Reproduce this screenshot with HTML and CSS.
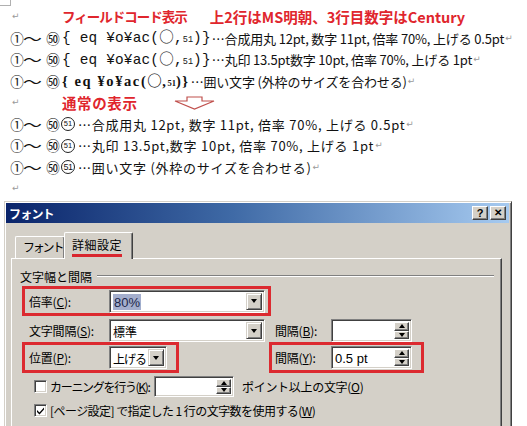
FILE: index.html
```html
<!DOCTYPE html>
<html lang="ja">
<head>
<meta charset="utf-8">
<title>フォント</title>
<link rel="stylesheet" href="styles.css">
</head>
<body>
<div class="corner"></div>
<div class="doc">
  <div class="line"><span class="ret lead">↵</span><span class="red r1 k">フィールドコード表示</span><span class="red r2">上2行はMS明朝、3行目数字はCentury</span></div>
  <div class="line"><span class="cn">①</span><span class="tl"><span class="tlg">～</span></span><span class="cn c50">㊿</span><span class="fc">{ eq ¥o¥ac(<span class="ring">○</span>,<span class="sm">51</span>)}</span><span class="tx"> …合成用丸 12pt, 数字 11pt, 倍率 70%, 上げる 0.5pt</span><span class="ret">↵</span></div>
  <div class="line"><span class="cn">①</span><span class="tl"><span class="tlg">～</span></span><span class="cn c50">㊿</span><span class="fc">{ eq ¥o¥ac(<span class="ring">○</span>,<span class="sm">51</span>)}</span><span class="tx"> …丸印 13.5pt数字 10pt, 倍率 70%, 上げる 1pt</span><span class="ret">↵</span></div>
  <div class="line"><span class="cn">①</span><span class="tl"><span class="tlg">～</span></span><span class="cn c50">㊿</span><span class="fc fc3">{ eq ¥o¥ac(<span class="ring">○</span>,<span class="sm">51</span>)}</span><span class="tx"> …囲い文字 (外枠のサイズを合わせる)</span><span class="ret">↵</span></div>
  <div class="line"><span class="ret lead">↵</span><span class="red r1 n">通常の表示</span><svg class="arrow" width="42" height="14" viewBox="0 0 42 14"><polygon points="13,1 28,1 28,5 40,5 20.5,13 1,5 13,5" fill="#fff" stroke="#c0504d" stroke-width="1.2"/></svg></div>
  <div class="line"><span class="cn">①</span><span class="tl"><span class="tlg">～</span></span><span class="cn c50">㊿</span><span class="c51">51</span><span class="tx t2"> …合成用丸 12pt, 数字 11pt, 倍率 70%, 上げる 0.5pt</span><span class="ret">↵</span></div>
  <div class="line"><span class="cn">①</span><span class="tl"><span class="tlg">～</span></span><span class="cn c50">㊿</span><span class="c51">51</span><span class="tx t2"> …丸印 13.5pt,数字 10pt, 倍率 70%, 上げる 1pt</span><span class="ret">↵</span></div>
  <div class="line"><span class="cn">①</span><span class="tl"><span class="tlg">～</span></span><span class="cn c50">㊿</span><span class="c51 big">51</span><span class="tx t2"> …囲い文字 (外枠のサイズを合わせる)</span><span class="ret">↵</span></div>
  <div class="line"><span class="ret lead">↵</span></div>
</div>

<div class="dialog">
  <div class="titlebar">
    <span class="ttl">フォント</span>
    <span class="tbtn">?</span><span class="tbtn x">✕</span>
  </div>
  <div class="tabs">
    <div class="tab kt">フォント</div>
    <div class="tab sel"><span class="selul">詳細設定</span></div>
  </div>
  <div class="panel">
    <div class="grp"><span>文字幅と間隔</span><span class="ln"></span></div>

    <div class="rbox row1">
      <span class="lbl">倍率(<u>C</u>):</span>
      <div class="combo w156"><span class="val"><span class="hl">80%</span></span><span class="dd"><span class="tri"></span></span></div>
    </div>

    <div class="row row2">
      <span class="lbl">文字間隔(<u>S</u>):</span>
      <div class="combo w156"><span class="val cjk">標準</span><span class="dd"><span class="tri"></span></span></div>
      <span class="lbl lbl2 ml10">間隔(<u>B</u>):</span>
      <div class="spin"><span class="val"></span><span class="sb"><span class="up"><span class="tu"></span></span><span class="dn"><span class="tri"></span></span></span></div>
    </div>

    <div class="row row3">
      <div class="rbox b3l">
        <span class="lbl">位置(<u>P</u>):</span>
        <div class="combo w58"><span class="val cjk tight">上げる</span><span class="dd"><span class="tri"></span></span></div>
      </div>
      <div class="rbox b3r">
        <span class="lbl lbl2">間隔(<u>Y</u>):</span>
        <div class="spin"><span class="val">0.5 pt</span><span class="sb"><span class="up"><span class="tu"></span></span><span class="dn"><span class="tri"></span></span></span></div>
      </div>
    </div>

    <div class="row row4">
      <span class="chk"></span>
      <span class="ctext w107 kk">カーニングを行う(<u>K</u>):</span>
      <div class="spin sp80"><span class="val"></span><span class="sb"><span class="up"><span class="tu"></span></span><span class="dn"><span class="tri"></span></span></span></div>
      <span class="ctext ml8 kp">ポイント以上の文字(<u>O</u>)</span>
    </div>

    <div class="row row5">
      <span class="chk on"><svg width="9" height="9" viewBox="0 0 9 9"><path d="M1 4 L3.5 6.5 L8 1.5 L8 3.5 L3.5 8.5 L1 6 Z" fill="#000"/></svg></span>
      <span class="ctext kw">[ページ設定] で指定した 1 行の文字数を使用する(<u>W</u>)</span>
    </div>
  </div>
</div>
</body>
</html>
```

FILE: styles.css
```css
html, body {
  margin: 0;
  padding: 0;
  background: #fff;
  overflow: hidden;
}
body {
  width: 527px;
  height: 426px;
  position: relative;
  font-family: "Noto Sans CJK JP", "Noto Sans", sans-serif;
  color: #111;
}
.corner {
  position: absolute;
  left: 0;
  top: 0;
  width: 10px;
  height: 5px;
  border-right: 1px solid #b0b0b0;
  border-bottom: 1px solid #b0b0b0;
}
.doc {
  padding: 6px 0 0 10px;
  height: 201px;
  box-sizing: border-box;
}
.line {
  height: 21.5px;
  line-height: 21.5px;
  font-size: 13px;
  white-space: nowrap;
  display: flex;
  align-items: center;
}
.ret {
  color: #9a9a9a;
  font-family: "DejaVu Sans", sans-serif;
  font-size: 9px;
  margin-left: 1px;
}
.ret.lead {
  margin-left: 2px;
  width: 7px;
}
.red {
  color: #e0262d;
  font-weight: bold;
  font-size: 14.5px;
}
.r1 { margin-left: 43px; }
.r1.k { font-size: 13.5px; letter-spacing: -1px; }
.r1.n { font-size: 14.5px; letter-spacing: 0.6px; }
.r2 { margin-left: 23px; letter-spacing: 0; }
.arrow { margin-left: 36px; margin-top: 1px; }
.cn {
  font-size: 13.5px;
  width: 14px;
  display: inline-block;
  text-align: center;
}
.tl {
  display: inline-block;
  width: 22px;
  height: 21px;
  line-height: 21px;
  text-align: left;
}
.tlg {
  display: inline-block;
  font-size: 14px;
  transform: scaleX(1.35);
  transform-origin: left center;
  margin-left: -1px;
}
.c50 {
  width: 14px;
  font-size: 13.5px;
}
.fc {
  font-family: "Liberation Mono", monospace;
  font-size: 14.4px;
  margin-left: 2px;
  letter-spacing: 0.2px;
}
.ring {
  font-family: "Noto Sans CJK JP", sans-serif;
  font-size: 14.5px;
  letter-spacing: 0.3px;
}
.fc3 {
  font-family: "Liberation Serif", serif;
  font-weight: bold;
  font-size: 14.5px;
  letter-spacing: 1.6px;
}
.sm { font-size: 8.5px; letter-spacing: 0; }
.tx { letter-spacing: -0.17px; margin-left: 1px; }
.tx.t2 { letter-spacing: 0.75px; }
.c51 {
  display: inline-block;
  width: 12px;
  height: 12px;
  border: 1px solid #222;
  border-radius: 50%;
  font-family: "Liberation Sans", sans-serif;
  font-size: 7.5px;
  line-height: 12px;
  text-align: center;
  margin-left: 1px;
  margin-right: 2px;
}
.c51.big { font-size: 9px; letter-spacing: -0.6px; }

/* dialog */
.dialog {
  margin: 0 0 0 4px;
  width: 508px;
  height: 240px;
  box-sizing: border-box;
  background: #d4d0c8;
  border-top: 1px solid #d4d0c8;
  border-left: 1px solid #d4d0c8;
  border-right: 1px solid #404040;
  box-shadow: inset 1px 1px #fff, inset -1px 0 #808080;
  padding: 1px 2px 0 1px;
  font-family: "Noto Sans CJK JP", sans-serif;
  font-size: 12px;
  color: #000;
}
.titlebar {
  height: 20px;
  background: linear-gradient(to right, #0a246a 0%, #3f6aa6 45%, #a6caf0 100%);
  display: flex;
  align-items: center;
  padding: 0 3px 0 3px;
}
.ttl {
  color: #fff;
  font-weight: bold;
  font-size: 12px;
  flex: 1;
  letter-spacing: -0.8px;
}
.tbtn {
  width: 16px;
  height: 14px;
  box-sizing: border-box;
  background: #d4d0c8;
  border-top: 1px solid #fff;
  border-left: 1px solid #fff;
  border-right: 1px solid #404040;
  border-bottom: 1px solid #404040;
  box-shadow: inset -1px -1px #808080;
  font-family: "Liberation Sans", sans-serif;
  font-weight: bold;
  font-size: 11px;
  line-height: 12px;
  text-align: center;
  color: #000;
}
.tbtn.x { margin-left: 2px; font-size: 10px; }
.tabs {
  display: flex;
  align-items: flex-end;
  height: 26px;
  margin-top: 9px;
  padding-left: 9px;
  position: relative;
  z-index: 2;
}
.tab {
  height: 22px;
  box-sizing: border-box;
  padding: 0 7px 0 9px;
  border-top: 1px solid #fff;
  border-left: 1px solid #fff;
  border-right: 1px solid #404040;
  box-shadow: inset -1px 0 #808080;
  border-radius: 2px 2px 0 0;
  line-height: 20px;
  font-size: 12px;
}
.tab.kt {
  width: 50px;
  padding: 0 0 0 7px;
  letter-spacing: -2.2px;
}
.tab.sel {
  height: 27px;
  width: 69px;
  margin-left: -1px;
  margin-bottom: -1px;
  padding: 2px 0 0 7px;
  background: #d4d0c8;
  letter-spacing: 0.5px;
}
.selul {
  display: inline-block;
  line-height: 18px;
  border-bottom: 3px solid #d9262e;
}
.panel {
  margin-left: 5px;
  width: 491px;
  height: 200px;
  box-sizing: border-box;
  border-top: 1px solid #fff;
  border-left: 1px solid #fff;
  border-right: 1px solid #404040;
  box-shadow: inset -1px 0 #808080;
  padding-top: 9px;
  position: relative;
  z-index: 1;
}
.grp {
  display: flex;
  align-items: center;
  margin-left: 8px;
  width: 474px;
  height: 16px;
}
.grp .ln {
  flex: 1;
  border-top: 1px solid #808080;
  border-bottom: 1px solid #fff;
  margin-left: 5px;
}
.rbox {
  border: 3px solid #dc2a30;
  box-sizing: border-box;
  display: flex;
  align-items: center;
}
.row1 {
  margin: 2px 0 0 10px;
  width: 249px;
  height: 30px;
  padding-left: 4px;
}
.row {
  display: flex;
  align-items: center;
}
.row2 {
  margin: 3px 0 0 17px;
  height: 23px;
}
.row3 {
  margin: 0 0 0 10px;
  height: 31px;
}
.b3l {
  width: 157px;
  height: 31px;
  padding-left: 4px;
}
.b3r {
  width: 155px;
  height: 31px;
  padding-left: 3px;
  margin-left: 90px;
}
.lbl {
  width: 80px;
  flex: none;
  letter-spacing: -0.2px;
}
.lbl2 { width: 56px; }
.ml10 { margin-left: 10px; }
u { text-decoration: underline; text-underline-offset: 1px; }
.combo, .spin {
  height: 23px;
  box-sizing: border-box;
  background: #fff;
  border-top: 1px solid #808080;
  border-left: 1px solid #808080;
  border-right: 1px solid #fff;
  border-bottom: 1px solid #fff;
  box-shadow: inset 1px 1px #404040, inset -1px -1px #d4d0c8;
  display: flex;
  align-items: stretch;
  padding: 2px;
  flex: none;
}
.w156 { width: 156px; }
.w58 { width: 58px; }
.val {
  flex: 1;
  font-family: "Liberation Sans", sans-serif;
  font-size: 13px;
  line-height: 19px;
  padding-left: 1px;
  white-space: nowrap;
  overflow: hidden;
}
.val.cjk {
  font-family: "Noto Sans CJK JP", sans-serif;
  font-size: 12px;
}
.val.tight { letter-spacing: -1px; }
.hl {
  background: #a4aecd;
  color: #20264a;
  padding: 0 1px;
  display: inline-block;
  line-height: 17px;
  margin-top: 1px;
}
.dd {
  width: 16px;
  flex: none;
  box-sizing: border-box;
  background: #d4d0c8;
  border-top: 1px solid #d4d0c8;
  border-left: 1px solid #d4d0c8;
  border-right: 1px solid #404040;
  border-bottom: 1px solid #404040;
  box-shadow: inset 1px 1px #fff, inset -1px -1px #808080;
  display: flex;
  align-items: center;
  justify-content: center;
}
.tri {
  width: 0;
  height: 0;
  border-left: 3.5px solid transparent;
  border-right: 3.5px solid transparent;
  border-top: 4px solid #000;
}
.tu {
  width: 0;
  height: 0;
  border-left: 3.5px solid transparent;
  border-right: 3.5px solid transparent;
  border-bottom: 4px solid #000;
}
.spin { width: 81px; }
.spin.sp80 { width: 80px; height: 21px; }
.sb {
  width: 15px;
  flex: none;
  display: flex;
  flex-direction: column;
}
.sb .up, .sb .dn {
  flex: 1;
  box-sizing: border-box;
  background: #d4d0c8;
  border-top: 1px solid #fff;
  border-left: 1px solid #fff;
  border-right: 1px solid #404040;
  border-bottom: 1px solid #404040;
  box-shadow: inset -1px -1px #808080;
  display: flex;
  align-items: center;
  justify-content: center;
}
.row4 {
  margin: 3px 0 0 22px;
  height: 21px;
}
.row5 {
  margin: 3px 0 0 22px;
  height: 20px;
}
.chk {
  width: 13px;
  height: 13px;
  box-sizing: border-box;
  background: #fff;
  border-top: 1px solid #808080;
  border-left: 1px solid #808080;
  border-right: 1px solid #fff;
  border-bottom: 1px solid #fff;
  box-shadow: inset 1px 1px #404040, inset -1px -1px #d4d0c8;
  display: flex;
  align-items: center;
  justify-content: center;
  flex: none;
}
.ctext {
  margin-left: 3px;
  white-space: nowrap;
  letter-spacing: -0.2px;
}
.w107 { width: 104px; flex: none; }
.kk { letter-spacing: -1.3px; }
.kp { letter-spacing: -0.3px; }
.kw { letter-spacing: -0.55px; }
.ml8 { margin-left: 8px; }
```
